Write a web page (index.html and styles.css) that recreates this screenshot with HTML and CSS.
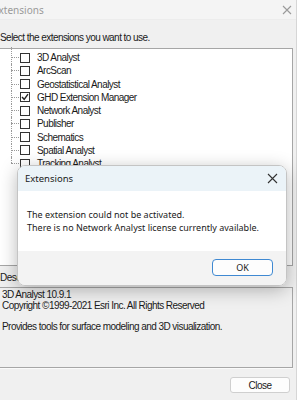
FILE: index.html
```html
<!DOCTYPE html>
<html>

<head>
  <title>Extensions</title>
  <link rel="stylesheet" href="styles.css">
</head>

<body>
  <div class="window">
    <div class="titlebar">
      <span class="title">Extensions</span>
      <svg class="close-x" width="10" height="10" viewBox="0 0 10 10">
        <path d="M1 1L9 9M9 1L1 9" stroke="#9a9a9a" stroke-width="1.1" fill="none" />
      </svg>
    </div>

    <div class="content">
      <p class="label">Select the extensions you want to use.</p>

      <ul class="ext-list">
        <li><span class="check"></span>3D Analyst</li>
        <li><span class="check"></span>ArcScan</li>
        <li><span class="check"></span>Geostatistical Analyst</li>
        <li><span class="check checked">
            <svg width="8" height="8" viewBox="0 0 8 8">
              <path d="M1 4L3.2 6.3L7 1.2" stroke="#222" stroke-width="1.4" fill="none" />
            </svg>
          </span>GHD Extension Manager</li>
        <li><span class="check"></span>Network Analyst</li>
        <li><span class="check"></span>Publisher</li>
        <li><span class="check"></span>Schematics</li>
        <li><span class="check"></span>Spatial Analyst</li>
        <li><span class="check"></span>Tracking Analyst</li>
      </ul>

      <p class="label desc-label">Description:</p>
      <div class="desc-box">
        <p>3D Analyst 10.9.1</p>
        <p>Copyright &copy;1999-2021 Esri Inc. All Rights Reserved</p>
        <p>&nbsp;</p>
        <p>Provides tools for surface modeling and 3D visualization.</p>
      </div>

      <div class="actions">
        <button class="btn-close">Close</button>
      </div>
    </div>
  </div>

  <!-- message box on top -->
  <div class="msgbox">
    <div class="msg-title">
      <span>Extensions</span>
      <svg width="11" height="11" viewBox="0 0 11 11">
        <path d="M1 1L10 10M10 1L1 10" stroke="#333" stroke-width="1.1" fill="none" />
      </svg>
    </div>
    <div class="msg-body">
      <p>The extension could not be activated.</p>
      <p>There is no Network Analyst license currently available.</p>
    </div>
    <div class="msg-footer">
      <button class="btn-ok">OK</button>
    </div>
  </div>
</body>

</html>
```

FILE: styles.css
```css
body {
  margin: 0;
  padding: 0;
  width: 297px;
  height: 400px;
  overflow: hidden;
  position: relative;
  background-color: #f0f0f0;
  font-family: "Liberation Sans", Arial, sans-serif;
  color: #1a1a1a;
}

p {
  margin: 0;
}

.window {
  margin-left: -8px;
  width: 304px;
  height: 400px;
  border-right: 1px solid #d6d6d6;
  background-color: #f0f0f0;
}

.titlebar {
  height: 19px;
  display: flex;
  align-items: center;
  justify-content: space-between;
  padding: 0 4px 0 1px;
  background-color: #f4f4f4;
  border-bottom: 1px solid #ececec;
}

.title {
  font-family: "Noto Sans", sans-serif;
  font-size: 10px;
  color: #9a9a9a;
}

.content {
  padding: 0 0 0 8px;
}

.label {
  font-size: 10px;
  letter-spacing: -0.55px;
  line-height: 11px;
  margin-top: 12px;
}

.ext-list {
  list-style: none;
  margin: 5px 0 0 -2px;
  padding: 2px 0 0 0;
  width: 293px;
  height: 214px;
  background-color: #fff;
  border: 1px solid #a6a6a6;
}

.ext-list li {
  position: relative;
  display: flex;
  align-items: center;
  height: 13.25px;
  padding-left: 21px;
  font-size: 10px;
  letter-spacing: -0.55px;
}

/* tree connector lines */
.ext-list li::before {
  content: "";
  position: absolute;
  left: 12px;
  top: 6px;
  width: 8px;
  border-top: 1px dotted #9a9a9a;
}

.ext-list li::after {
  content: "";
  position: absolute;
  left: 12px;
  top: 0;
  bottom: 0;
  border-left: 1px dotted #9a9a9a;
}

.ext-list li:first-child::after {
  top: -4px;
}

.ext-list li:last-child::after {
  bottom: 7px;
}

.check {
  width: 8px;
  height: 8px;
  border: 1px solid #333;
  background-color: #fff;
  margin-right: 7px;
  display: flex;
  align-items: center;
  justify-content: center;
}

.desc-label {
  margin-top: 6px;
}

.desc-box {
  margin: 4px 0 0 -2px;
  width: 290px;
  height: 77px;
  padding: 2px 0 0 3px;
  border: 1px solid #a6a6a6;
  border-left-color: #e0e0e0;
  box-shadow: 0 1px 0 #fafafa;
  font-size: 10px;
  letter-spacing: -0.55px;
  line-height: 10.8px;
}

.actions {
  display: flex;
  justify-content: flex-end;
  padding: 9px 6px 0 0;
}

.btn-close {
  width: 60px;
  height: 16px;
  padding: 0;
  background-color: #fdfdfd;
  border: 1px solid #cfcfcf;
  border-radius: 3px;
  font-family: "Liberation Sans", Arial, sans-serif;
  font-size: 10px;
  letter-spacing: -0.5px;
  color: #1a1a1a;
}

/* message box */
.msgbox {
  position: absolute;
  left: 17px;
  top: 165px;
  width: 268px;
  height: 119px;
  border: 1px solid #c4c4c4;
  border-radius: 8px;
  overflow: hidden;
  box-shadow: 0 4px 18px rgba(0, 0, 0, 0.28);
  font-family: "Noto Sans", sans-serif;
  color: #1a1a1a;
}

.msg-title {
  height: 25px;
  display: flex;
  align-items: center;
  justify-content: space-between;
  padding: 0 8px 0 7px;
  background-color: #ebf3f8;
  font-size: 9.5px;
}

.msg-body {
  height: 42px;
  padding: 18px 0 0 9px;
  background-color: #fff;
  font-size: 9px;
  line-height: 12.7px;
}

.msg-footer {
  height: 34px;
  display: flex;
  justify-content: flex-end;
  align-items: flex-start;
  padding: 8px 13px 0 0;
  box-sizing: border-box;
  background-color: #f3f3f3;
}

.btn-ok {
  width: 61px;
  height: 17px;
  padding: 0;
  background-color: #fdfdfd;
  border: 1px solid #3f89d2;
  border-radius: 4px;
  font-family: "Noto Sans", sans-serif;
  font-size: 9px;
  color: #1a1a1a;
}
```
